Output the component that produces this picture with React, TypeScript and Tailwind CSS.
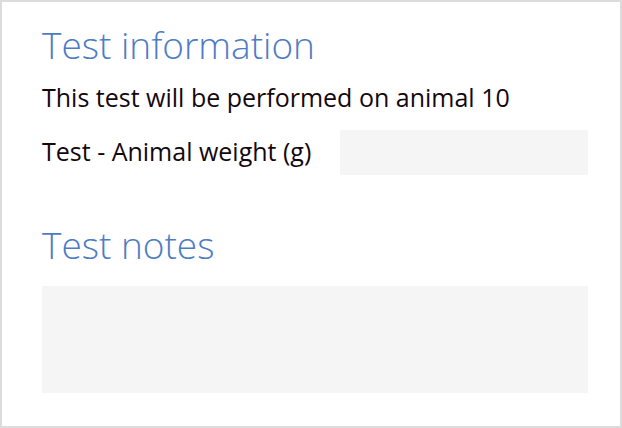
export default function App() {
  return (
    <div className="w-[622px] h-[428px] border-2 border-[#dcdcdc] bg-white font-['Open_Sans',sans-serif] text-[#14080f]">
      <div className="pl-[40px] pr-[32px] pt-[21px]">
        {/* Test information */}
        <h1 className="text-[37px] leading-[44px] font-light text-[#4d7cc5]">Test information</h1>
        <p className="mt-[14px] text-[25px] leading-[32px]">This test will be performed on animal 10</p>
        <div className="mt-[17px] flex items-center">
          <label className="w-[298px] text-[25px] leading-[32px] pb-[3px]">Test - Animal weight (g)</label>
          <input className="h-[45px] w-[248px] bg-[#f5f5f5] outline-none" />
        </div>

        {/* Test notes */}
        <h2 className="mt-[48px] text-[37px] leading-[44px] font-light text-[#4d7cc5]">Test notes</h2>
        <textarea className="mt-[19px] block h-[107px] w-[546px] bg-[#f5f5f5] outline-none resize-none" />
      </div>
    </div>
  );
}
